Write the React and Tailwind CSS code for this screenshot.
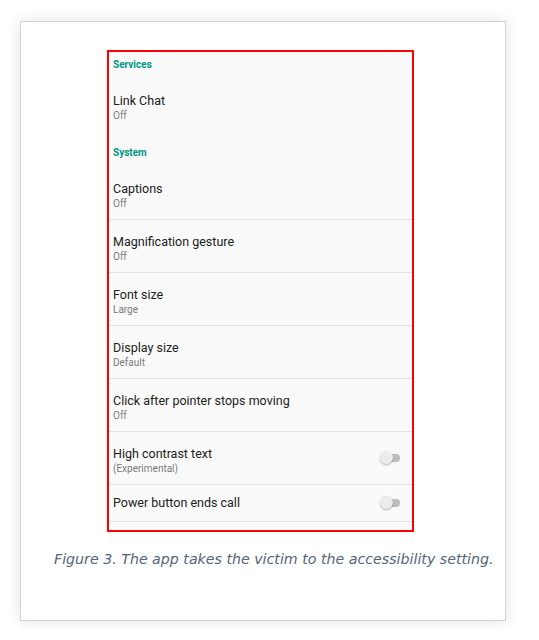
import React from 'react';

const items = [
  { type: 'header', label: 'Services', first: true },
  { type: 'item', title: 'Link Chat', sub: 'Off', divider: false },
  { type: 'header', label: 'System' },
  { type: 'item', title: 'Captions', sub: 'Off' },
  { type: 'item', title: 'Magnification gesture', sub: 'Off' },
  { type: 'item', title: 'Font size', sub: 'Large' },
  { type: 'item', title: 'Display size', sub: 'Default' },
  { type: 'item', title: 'Click after pointer stops moving', sub: 'Off' },
  { type: 'item', title: 'High contrast text', sub: '(Experimental)', toggle: true },
  { type: 'item', title: 'Power button ends call', toggle: true, short: true },
];

const Toggle = () => (
  <div className="relative w-[20px] h-[14px]">
    <div className="absolute right-0 top-[3px] w-[17px] h-[8px] rounded-full bg-[#bdbdbd]" />
    <div className="absolute left-0 top-0 w-[13px] h-[13px] rounded-full bg-[#ececec] shadow-[0_1px_2px_rgba(0,0,0,0.3)]" />
  </div>
);

function Row({ item }) {
  if (item.type === 'header') {
    return (
      <div
        className={`px-[4px] text-[10px] font-bold text-[#009688] ${item.first ? 'pt-[5px] h-[27px]' : 'pt-[13px] h-[35px]'}`}
      >
        {item.label}
      </div>
    );
  }
  return (
    <div
      className={`flex items-center justify-between pl-[4px] pr-[12px] ${item.short ? 'h-[37px]' : 'h-[53px]'} ${item.divider === false ? '' : 'border-b border-[#e3e3e3]'}`}
    >
      <div className={`flex flex-col ${item.sub ? 'mt-[5px]' : ''}`}>
        <span className="text-[12.5px] leading-[16px] text-[#212121]">{item.title}</span>
        {item.sub && <span className="text-[10px] leading-[14px] text-[#7a7a7a]">{item.sub}</span>}
      </div>
      {item.toggle && <Toggle />}
    </div>
  );
}

export default function App() {
  return (
    <div className="w-[539px] h-[640px] bg-white pt-[21px] pl-[20px]" style={{ fontFamily: 'Roboto, sans-serif' }}>
      <div className="w-[486px] h-[600px] bg-white border border-[#d4d4d4] shadow-[0_0_14px_rgba(0,0,0,0.12)] flex flex-col pt-[28px]">
        <div className="ml-[86px] w-[307px] h-[482px] border-2 border-[#ff0000] bg-[#fafafa] overflow-hidden">
          {items.map((it, i) => (
            <Row key={i} item={it} />
          ))}
        </div>
        <p
          className="mt-[17px] ml-[33px] text-[14.2px] italic text-[#56657a]"
          style={{ fontFamily: '"DejaVu Sans", sans-serif' }}
        >
          Figure 3. The app takes the victim to the accessibility setting.
        </p>
      </div>
    </div>
  );
}
